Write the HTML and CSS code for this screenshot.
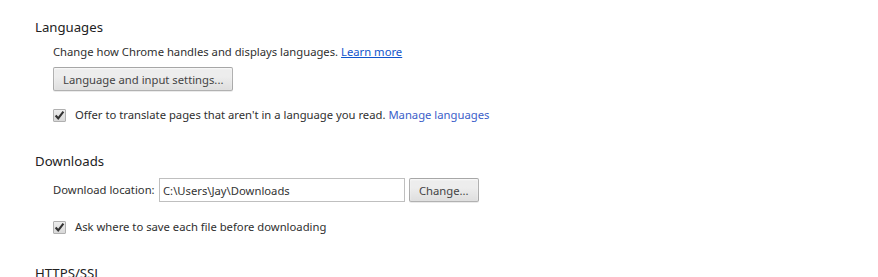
FILE: index.html
```
<!DOCTYPE html>
<html lang="en">
<head>
  <meta charset="UTF-8" />
  <title>Settings</title>
  <link rel="stylesheet" href="styles.css">
</head>
<body>
  <main>
    <section class="section">
      <h3>Languages</h3>
      <div class="settings">
        <div class="line">Change how Chrome handles and displays languages. <a href="#" class="learn">Learn more</a></div>
        <div class="line btn-line"><button>Language and input settings...</button></div>
        <label class="check-row">
          <span class="checkbox"><svg width="11" height="11" viewBox="0 0 11 11"><path d="M1.6 5.6 L4.2 8.3 L9.4 1.6" fill="none" stroke="#333" stroke-width="2.1"/></svg></span>
          <span>Offer to translate pages that aren't in a language you read. <a href="#" class="manage">Manage languages</a></span>
        </label>
      </div>
    </section>

    <section class="section">
      <h3>Downloads</h3>
      <div class="settings">
        <div class="line location">
          <span class="location-label">Download location:</span>
          <input type="text" value="C:\Users\Jay\Downloads" />
          <button>Change...</button>
        </div>
        <label class="check-row">
          <span class="checkbox"><svg width="11" height="11" viewBox="0 0 11 11"><path d="M1.6 5.6 L4.2 8.3 L9.4 1.6" fill="none" stroke="#333" stroke-width="2.1"/></svg></span>
          <span>Ask where to save each file before downloading</span>
        </label>
      </div>
    </section>

    <section class="section">
      <h3>HTTPS/SSL</h3>
    </section>
  </main>
</body>
</html>
```

FILE: styles.css
```
body {
  margin: 0;
  font-family: "Noto Sans", "Open Sans", sans-serif;
  font-size: 11.25px;
  color: #303030;
  background-color: white;
  overflow: hidden;
}

main {
  padding: 17px 35px 0;
}

.section {
  margin-bottom: 27px;
}

h3 {
  margin: 0;
  font-size: 13.2px;
  font-weight: normal;
  line-height: 20px;
  color: #222;
}

.settings {
  padding-left: 18px;
}

.line {
  line-height: 18px;
  margin-top: 6px;
}

.btn-line {
  margin-top: 6px;
}

a.learn {
  color: #15c;
  text-decoration: underline;
}

a.manage {
  color: #3b60c9;
  text-decoration: none;
}

button {
  font-family: inherit;
  font-size: 11.25px;
  color: #444;
  height: 24px;
  padding: 0 9px;
  border: 1px solid rgba(0, 0, 0, 0.25);
  border-radius: 2px;
  background: linear-gradient(#ededed, #ededed 38%, #dedede);
  box-shadow: 0 1px 0 rgba(0, 0, 0, 0.08), inset 0 1px 2px rgba(255, 255, 255, 0.75);
  vertical-align: top;
}

.check-row {
  display: flex;
  align-items: center;
  gap: 9px;
  line-height: 18px;
  margin-top: 15px;
}

.checkbox {
  width: 11px;
  height: 11px;
  border: 1px solid #b0b0b0;
  border-radius: 1px;
  background: linear-gradient(#ededed, #d8d8d8);
  display: flex;
  align-items: center;
  justify-content: center;
}

.location {
  display: flex;
  align-items: center;
  margin-top: 7px;
}

.location-label {
  width: 106px;
}

.location input {
  width: 238px;
  height: 22px;
  padding: 0 3px;
  box-sizing: content-box;
  border: 1px solid #bfbfbf;
  font-family: inherit;
  font-size: 11.25px;
  color: #333;
  margin: 0 4px 0 0;
}

.location button {
  height: 24px;
}

.location + .check-row {
  margin-top: 16px;
}
```
